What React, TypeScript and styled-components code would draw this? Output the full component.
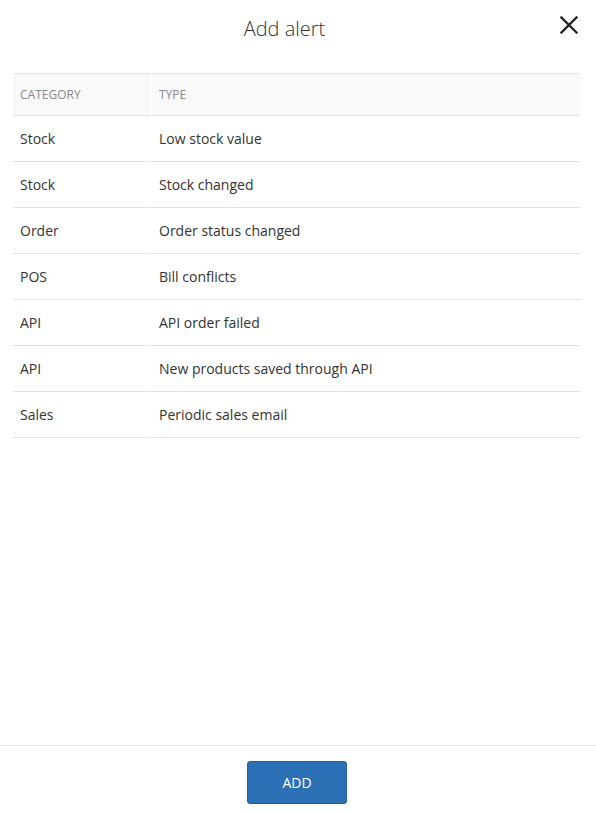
import React from "react";
import styled, { createGlobalStyle } from "styled-components";

const Global = createGlobalStyle`
  html, body { margin: 0; padding: 0; background: #fff; }
  body { font-family: "Open Sans", "Liberation Sans", sans-serif; color: #333; }
  * { box-sizing: border-box; }
`;

const Page = styled.div`
  height: 813px;
  display: flex;
  flex-direction: column;
`;

const Header = styled.header`
  height: 73px;
  display: flex;
  align-items: center;
  justify-content: center;
  position: relative;
  padding-bottom: 17px;
  padding-right: 27px;
`;

const Title = styled.h1`
  margin: 0;
  font-weight: 300;
  font-size: 20px;
  color: #333;
  letter-spacing: 0;
`;

const Close = styled.button`
  position: absolute;
  right: 15px;
  top: 13px;
  width: 24px;
  height: 24px;
  padding: 0;
  border: 0;
  background: none;
  cursor: pointer;
  display: flex;
  align-items: center;
  justify-content: center;
`;

const Body = styled.main`
  flex: 1;
  padding: 0 15px 0 12px;
`;

const Table = styled.table`
  width: 100%;
  border-collapse: separate;
  border-spacing: 1px 0;
  font-size: 14px;
`;

const Th = styled.th<{ $w?: number }>`
  text-align: left;
  font-weight: 400;
  font-size: 12px;
  text-transform: uppercase;
  color: #888;
  background: #f9f9f9;
  height: 43px;
  padding: 0 6px 0 7px;
  border-top: 1px solid #e3e3e3;
  border-bottom: 1px solid #e3e3e3;
  width: ${(p) => (p.$w ? `${p.$w}px` : "auto")};
`;

const Td = styled.td`
  height: 46px;
  padding: 0 6px 0 7px;
  border-bottom: 1px solid #e0e0e0;
  color: #333;
`;

const Footer = styled.footer`
  border-top: 1px solid #e5e5e5;
  height: 68px;
  display: flex;
  justify-content: center;
  padding-top: 15px;
  padding-right: 2px;
`;

const AddButton = styled.button`
  width: 100px;
  height: 43px;
  background: #2b6fb4;
  border: 1px solid #255f9b;
  border-radius: 3px;
  color: #fff;
  font-family: "Open Sans", "Liberation Sans", sans-serif;
  font-size: 14px;
  cursor: pointer;
`;

const rows: [string, string][] = [
  ["Stock", "Low stock value"],
  ["Stock", "Stock changed"],
  ["Order", "Order status changed"],
  ["POS", "Bill conflicts"],
  ["API", "API order failed"],
  ["API", "New products saved through API"],
  ["Sales", "Periodic sales email"],
];

export default function App() {
  return (
    <>
      <Global />
      <Page>
        <Header>
          <Title>Add alert</Title>
          <Close aria-label="Close">
            <svg width="18" height="18" viewBox="0 0 18 18">
              <path d="M1.5 1.5 L16.5 16.5 M16.5 1.5 L1.5 16.5" stroke="#222" strokeWidth="2.3" strokeLinecap="square" />
            </svg>
          </Close>
        </Header>
        <Body>
          <Table>
            <thead>
              <tr>
                <Th $w={138}>Category</Th>
                <Th>Type</Th>
              </tr>
            </thead>
            <tbody>
              {rows.map(([c, t], i) => (
                <tr key={i}>
                  <Td>{c}</Td>
                  <Td>{t}</Td>
                </tr>
              ))}
            </tbody>
          </Table>
        </Body>
        <Footer>
          <AddButton>ADD</AddButton>
        </Footer>
      </Page>
    </>
  );
}
